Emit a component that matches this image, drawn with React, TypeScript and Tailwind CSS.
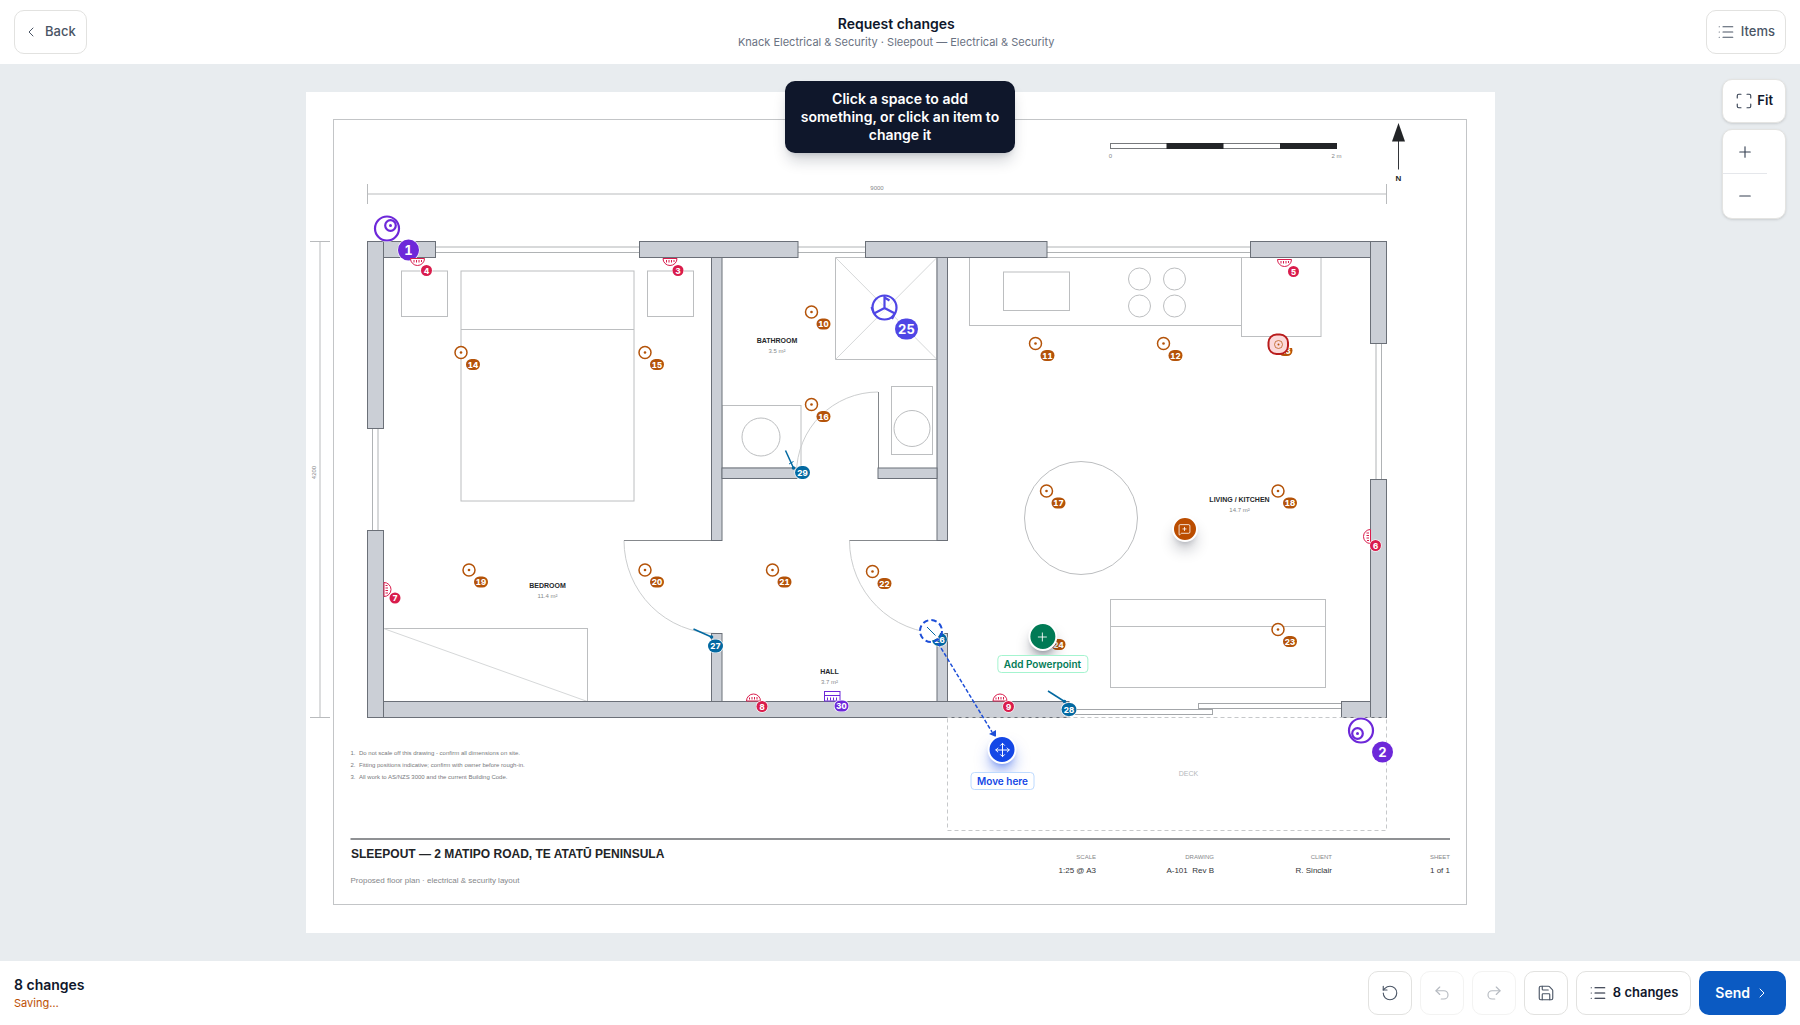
import React from 'react';
import {
  ChevronLeft,
  ChevronRight,
  List,
  Maximize,
  MessageSquarePlus,
  Minus,
  Move,
  Plus,
  Redo2,
  RotateCcw,
  Save,
  Undo2,
} from 'lucide-react';

// Sheet bounds in plan units
const SHEET = { x: 306, y: 92, width: 1189, height: 841 };

const ORANGE = '#b45309';
const ROSE = '#d91c4c';
const BLUE = '#0369a1';
const PURPLE = '#6d28d9';
const INDIGO = '#4f46e5';

type Box = [x1: number, y1: number, x2: number, y2: number];

const walls: Box[] = [
  [367.5, 241.5, 435.5, 257.5],
  [639.5, 241.5, 798, 257.5],
  [865.5, 241.5, 1047, 257.5],
  [1250.5, 241.5, 1371, 257.5],
  [367.5, 701.5, 1069, 717.5],
  [1341.5, 701.5, 1371, 717.5],
  [367.5, 241.5, 383.5, 428.5],
  [367.5, 530.5, 383.5, 717.5],
  [1370.5, 241.5, 1386.5, 343.5],
  [1370.5, 479.5, 1386.5, 717.5],
  [711.5, 257.5, 722, 540.5],
  [711.5, 633.5, 722, 701.5],
  [937, 257.5, 947.5, 540.5],
  [937, 633.5, 947.5, 701.5],
  [722, 468, 797, 478.5],
  [878, 468, 937, 478.5],
];

const windows: Box[] = [
  [435.5, 247, 639.5, 252.5],
  [798, 247, 865.5, 252.5],
  [1047, 247, 1250.5, 252.5],
  [372.5, 428.5, 378, 530.5],
  [1376, 343.5, 1381.5, 479.5],
];

const furniture: Box[] = [
  [401.5, 271, 447.5, 316.5],
  [647.5, 271, 693.5, 316.5],
  [461, 271, 634, 501],
  [835.5, 257.5, 937, 359.5],
  [722, 405.5, 801, 468],
  [891.5, 386.5, 932.5, 454.5],
  [969.5, 257.5, 1241.5, 325.5],
  [1003.5, 272, 1069.5, 310.5],
  [1241.5, 257.5, 1321, 336.5],
  [1110.5, 599.5, 1325.5, 687.5],
  [383.5, 628.5, 587.5, 701.5],
];

const circles = [
  [761, 437, 19],
  [912, 428.5, 18],
  [1139.5, 279, 11],
  [1174.5, 279, 11],
  [1139.5, 306, 11],
  [1174.5, 306, 11],
  [1081, 518, 56.5],
];

const rooms = [
  { name: 'BATHROOM', area: '3.5 m²', x: 777, y: 343 },
  { name: 'BEDROOM', area: '11.4 m²', x: 547.5, y: 588 },
  { name: 'HALL', area: '3.7 m²', x: 829.5, y: 674 },
  { name: 'LIVING / KITCHEN', area: '14.7 m²', x: 1239.5, y: 502 },
];

const notes = [
  'Do not scale off this drawing - confirm all dimensions on site.',
  'Fitting positions indicative; confirm with owner before rough-in.',
  'All work to AS/NZS 3000 and the current Building Code.',
];

const meta = [
  { label: 'SCALE', value: '1:25 @ A3', x: 1096 },
  { label: 'DRAWING', value: 'A-101\u00a0 Rev B', x: 1214 },
  { label: 'CLIENT', value: 'R. Sinclair', x: 1332 },
  { label: 'SHEET', value: '1 of 1', x: 1450 },
];

const downlights = [
  { id: 10, x: 811.5, y: 312 },
  { id: 11, x: 1035.5, y: 343.5 },
  { id: 12, x: 1163.5, y: 343.5 },
  { id: 14, x: 461, y: 352.5 },
  { id: 15, x: 645, y: 352.5 },
  { id: 16, x: 811.5, y: 404.5 },
  { id: 17, x: 1046.5, y: 491 },
  { id: 18, x: 1278, y: 491 },
  { id: 19, x: 469, y: 570 },
  { id: 20, x: 645, y: 570 },
  { id: 21, x: 772.5, y: 570 },
  { id: 22, x: 872.5, y: 571.5 },
  { id: 23, x: 1278, y: 629.5 },
  { id: 24, x: 1046.5, y: 632.5 },
];

// turn: direction the outlet faces off its wall, 0 = down
const outlets = [
  { id: 3, x: 670, y: 258, turn: 0, bx: 678, by: 270.5 },
  { id: 4, x: 417.5, y: 258, turn: 0, bx: 426.5, by: 270.5 },
  { id: 5, x: 1284.5, y: 259, turn: 0, bx: 1293.5, by: 271.5 },
  { id: 6, x: 1371, y: 536.5, turn: 90, bx: 1375.5, by: 545.5 },
  { id: 7, x: 383.5, y: 589.5, turn: -90, bx: 395, by: 598 },
  { id: 8, x: 753.5, y: 701.5, turn: 180, bx: 762, by: 706.5 },
  { id: 9, x: 1000, y: 701.5, turn: 180, bx: 1008.5, by: 706.5 },
];

const switches = [
  { id: 27, x: 711.5, y: 637, tx: 693.5, ty: 629, bx: 715.5, by: 646 },
  { id: 28, x: 1064.5, y: 701.5, tx: 1048, ty: 691, bx: 1069, by: 709.5 },
  { id: 29, x: 793.5, y: 468, tx: 785.5, ty: 450.5, bx: 802.5, by: 472.5 },
];

const asRect = ([x1, y1, x2, y2]: Box) => ({ x: x1, y: y1, width: x2 - x1, height: y2 - y1 });

interface BadgeProps {
  id: number;
  x: number;
  y: number;
  color: string;
  size?: 'sm' | 'md' | 'lg';
}

const Badge: React.FC<BadgeProps> = ({ id, x, y, color, size = 'sm' }) => {
  const h = { sm: 11, md: 13, lg: 21 }[size];
  const w = id > 9 ? { sm: 14, md: 15, lg: 23 }[size] : h;
  return (
    <g>
      <rect
        x={x - w / 2 - 0.5}
        y={y - h / 2 - 0.5}
        width={w + 1}
        height={h + 1}
        rx={h / 2}
        fill="#fff"
        stroke="none"
      />
      <rect x={x - w / 2} y={y - h / 2} width={w} height={h} rx={h / 2} fill={color} stroke="none" />
      <text
        x={x}
        y={y + (size === 'lg' ? 5 : 3)}
        textAnchor="middle"
        fill="#fff"
        stroke="none"
        className={
          size === 'lg'
            ? 'font-[Inter] text-[13px] font-bold tabular-nums'
            : 'font-[Inter] text-[8px] font-extrabold tabular-nums'
        }
      >
        {id}
      </text>
    </g>
  );
};

const Camera = ({ id, x, y, lx, ly }: { id: number; x: number; y: number; lx: number; ly: number }) => (
  <g fill="#fff" stroke={PURPLE} strokeWidth={2.2}>
    <circle cx={x} cy={y} r={13.5} stroke="none" />
    <circle cx={x} cy={y} r={12} />
    <circle cx={lx} cy={ly} r={5.3} />
    <circle cx={lx} cy={ly} r={1.5} fill={PURPLE} stroke="none" />
    <Badge id={id} x={x + 21.5} y={y + 21.5} color={PURPLE} size="lg" />
  </g>
);

const FloorPlan: React.FC = () => (
  <svg
    viewBox={`${SHEET.x} ${SHEET.y} ${SHEET.width} ${SHEET.height}`}
    role="img"
    aria-label="Sleepout floor plan"
    className="block h-full w-full bg-white font-['Liberation_Sans',Arial,sans-serif]"
  >
    <rect x={333.5} y={119.5} width={1133} height={785} fill="none" stroke="#c3c5c7" />

    {/* Overall dimensions */}
    <path d="M367.5 194H1386.5M367.5 184v20M1386.5 184v20M320 241.5V717.5M310 241.5h20M310 717.5h20" stroke="#b9bbbd" fill="none" />
    <g className="text-[6px]" fill="#85878a" textAnchor="middle">
      <text x={877} y={190}>9000</text>
      <text transform="translate(315.5 472.5) rotate(-90)">4200</text>
      <text x={1110.5} y={158}>0</text>
      <text x={1336.5} y={158}>2 m</text>
    </g>

    {/* Scale bar and north point */}
    <rect x={1110.5} y={143.5} width={226} height={5} fill="#fff" stroke="#77797c" />
    <rect x={1166.5} y={143} width={57} height={6} fill="#222427" />
    <rect x={1280} y={143} width={57} height={6} fill="#222427" />
    <path d="M1398.5 141v28.5" stroke="#333539" />
    <path d="M1398.5 123l6.5 18.5h-13z" fill="#222427" />
    <text x={1398.5} y={181} textAnchor="middle" fill="#222427" className="text-[8px] font-bold">N</text>

    {/* Furniture */}
    <g fill="none" stroke="#bcbec0">
      {furniture.map((box, i) => (
        <rect key={i} {...asRect(box)} />
      ))}
      {circles.map(([cx, cy, r], i) => (
        <circle key={i} cx={cx} cy={cy} r={r} />
      ))}
      <path d="M461 329.5h173M1110.5 626.5h215" />
      <path d="M835.5 257.5l101.5 102M937 257.5l-101.5 102M383.5 628.5l204 73" stroke="#d6d8d9" />
    </g>

    {/* Doors */}
    <g fill="none" stroke="#cccecf">
      <path d="M624 540.5a93 93 0 0 0 93 93" />
      <path d="M849.5 540.5a93 93 0 0 0 93 93" />
      <path d="M878 392a81.5 81.5 0 0 0-81.5 81.5" />
      <path d="M624 540.5h93M849.5 540.5h93M878.5 392v81" stroke="#85888c" />
    </g>

    {windows.map((box, i) => {
      const [x1, y1, x2, y2] = box;
      const d = x2 - x1 > y2 - y1 ? `M${x1} ${y1}H${x2}M${x1} ${y2}H${x2}` : `M${x1} ${y1}V${y2}M${x2} ${y1}V${y2}`;
      return <path key={i} d={d} stroke="#b0b3b5" />;
    })}
    <g fill="#fff" stroke="#a3a6a9">
      <rect x={1069} y={709.5} width={143.5} height={5} />
      <rect x={1198.5} y={703.5} width={143} height={5} />
    </g>

    <g fill="#cbcfd6" stroke="#6b7078">
      {walls.map((box, i) => (
        <rect key={i} {...asRect(box)} />
      ))}
    </g>

    <rect x={947.5} y={717.5} width={439} height={113} fill="none" stroke="#c6c8ca" strokeDasharray="4 3" />
    <text x={1188.5} y={776} textAnchor="middle" fill="#b4b7ba" className="text-[7px]">DECK</text>

    {rooms.map((room) => (
      <g key={room.name} textAnchor="middle">
        <text x={room.x} y={room.y} fill="#26282b" className="text-[7px] font-bold">{room.name}</text>
        <text x={room.x} y={room.y + 10} fill="#85878a" className="text-[6px]">{room.area}</text>
      </g>
    ))}

    {/* Notes and title block */}
    {notes.map((note, i) => (
      <g key={note} fill="#77797c" className="text-[6px]">
        <text x={350.5} y={755 + i * 12}>{i + 1}.</text>
        <text x={359} y={755 + i * 12}>{note}</text>
      </g>
    ))}
    <path d="M350.5 839H1450" stroke="#8f9194" strokeWidth={2} />
    <text x={351} y={858} fill="#222427" className="text-[12px] font-bold">SLEEPOUT — 2 MATIPO ROAD, TE ATATŪ PENINSULA</text>
    <text x={350.5} y={883} fill="#85878a" className="text-[8px]">Proposed floor plan · electrical & security layout</text>
    {meta.map((m) => (
      <g key={m.label} textAnchor="end">
        <text x={m.x} y={859} fill="#85878a" className="text-[6px]">{m.label}</text>
        <text x={m.x} y={873} fill="#333539" className="text-[8px]">{m.value}</text>
      </g>
    ))}

    {/* Fittings */}
    <Camera id={1} x={387} y={228.5} lx={390.5} ly={225.5} />
    <Camera id={2} x={1361} y={730.5} lx={1357.5} ly={733.5} />

    <g stroke={INDIGO} strokeWidth={2.2} fill="none">
      <circle cx={884.5} cy={307.5} r={13} fill="#fff" fillOpacity={0.6} stroke="none" />
      <circle cx={884.5} cy={307.5} r={12} />
      <path d="M884.5 296v12l10.5 5.5M884.5 308l-10.5 5.500M884.500 297.500l5 3M894.500 314l-2.500 5M873.500 312l-2-5" />
      <Badge id={25} x={906.5} y={329} color={INDIGO} size="lg" />
    </g>

    {outlets.map((o) => (
      <g key={o.id}>
        <g transform={`translate(${o.x} ${o.y}) rotate(${o.turn})`} stroke={ROSE} fill="#fff">
          <path d="M-7 .5H7A7 7 0 0 1-7 .5z" />
          <path d="M-3.500 2v2.500M-1 2v2.500M1.500 2v2.500M4 2v2" />
        </g>
        <Badge id={o.id} x={o.bx} y={o.by} color={ROSE} />
      </g>
    ))}

    {downlights.map((d) => (
      <g key={d.id}>
        <circle cx={d.x} cy={d.y} r={6} fill="#fff" fillOpacity={0.8} stroke={ORANGE} strokeWidth={1.5} />
        <circle cx={d.x} cy={d.y} r={1.3} fill={ORANGE} />
        <Badge id={d.id} x={d.x + 12} y={d.y + 12} color={ORANGE} />
      </g>
    ))}

    {switches.map((s) => (
      <g key={s.id} stroke={BLUE}>
        <path d={`M${s.tx} ${s.ty}L${s.x} ${s.y}`} strokeWidth={1.5} />
        <circle cx={s.x} cy={s.y} r={1.8} fill={BLUE} stroke="none" />
        <Badge id={s.id} x={s.bx} y={s.by} color={BLUE} size="md" />
      </g>
    ))}
    <path d="M789 464l4.500-2.500" stroke={BLUE} />

    <g stroke={PURPLE} fill="#fff">
      <rect x={824.5} y={691.5} width={15.5} height={9.5} />
      <path d="M824.500 695.500h15.500M827.500 697.500v3M830.500 697.500v3M833.500 697.500v3M836.500 697.500v3" />
      <Badge id={30} x={841.5} y={706} color={PURPLE} />
    </g>

    {/* Removed downlight */}
    <Badge id={13} x={1285.5} y={350.5} color={ORANGE} />
    <path d="M1276 343h18v5h-18z" fill="#fff" />
    <rect x={1268.5} y={334.5} width={19.5} height={19.5} rx={8} fill="#fbd9da" stroke="#b91c1c" strokeWidth={2} />
    <circle cx={1278.5} cy={344.5} r={4} fill="none" stroke={ORANGE} strokeOpacity={0.7} />
    <circle cx={1278.5} cy={344.5} r={1} fill={ORANGE} />

    {/* Moved switch */}
    <Badge id={26} x={939.5} y={639.5} color={BLUE} size="md" />
    <circle cx={930.5} cy={630.5} r={10} fill="#fff" />
    <path d="M927 627l8.500 8.500" stroke={BLUE} />
    <circle cx={931} cy={631} r={11} fill="none" stroke="#1d4ed8" strokeWidth={2} strokeDasharray="5.500 3.140" />
    <path d="M938 643l54 89" stroke="#1d4ed8" strokeWidth={1.5} strokeDasharray="4 2" />
    <path d="M989 734l7-4v7z" fill="#1d4ed8" />
  </svg>
);

interface PinProps {
  x: number;
  y: number;
  name: string;
  className: string;
  label?: string;
  labelClassName?: string;
  children: React.ReactNode;
}

const Pin: React.FC<PinProps> = ({ x, y, name, className, label, labelClassName, children }) => (
  <div
    className="absolute -mt-[14px] flex -translate-x-1/2 flex-col items-center"
    style={{
      left: `${((x - SHEET.x) / SHEET.width) * 100}%`,
      top: `${((y - SHEET.y) / SHEET.height) * 100}%`,
    }}
  >
    <button aria-label={name} className={`flex items-center justify-center rounded-full border-2 border-white text-white ${className}`}>
      {children}
    </button>
    {label && (
      <span className={`rounded border bg-white px-1.5 text-[10px] leading-4 font-semibold whitespace-nowrap ${labelClassName}`}>
        {label}
      </span>
    )}
  </div>
);

const iconButton =
  'flex size-11 items-center justify-center rounded-[10px] border border-[#e2e2e0] bg-white text-gray-600 disabled:opacity-40';

export default function App() {
  return (
    <div className="flex h-screen flex-col overflow-hidden bg-white font-[Inter,sans-serif] text-slate-900">
      <header className="flex h-16 shrink-0 items-center justify-between px-3.5">
        <button className="flex h-11 items-center gap-1.5 rounded-[10px] border border-[#e2e2e0] pr-2.5 pl-2 text-[13px] font-medium text-gray-600">
          <ChevronLeft size={16} strokeWidth={1.5} />
          Back
        </button>
        <div className="flex-1 text-center">
          <h1 className="text-sm leading-5 font-semibold">Request changes</h1>
          <p className="text-[11px] leading-4 text-gray-500">Knack Electrical &amp; Security · Sleepout — Electrical &amp; Security</p>
        </div>
        <button className="flex h-11 items-center gap-1.5 rounded-[10px] border border-[#e2e2e0] px-2.5 text-[13px] font-medium text-gray-600">
          <List size={18} strokeWidth={1.5} />
          Items
        </button>
      </header>

      <main className="relative min-h-0 flex-1 bg-[#e8ecef] py-7">
        <div className="relative mx-auto aspect-[1189/841] h-full max-w-full">
          <FloorPlan />
          <Pin x={1185.5} y={530} name="Comment" className="size-[26px] bg-amber-700 shadow-lg shadow-slate-900/30">
            <MessageSquarePlus size={13} strokeWidth={1.5} />
          </Pin>
          <Pin
            x={1043}
            y={636}
            name="Added powerpoint"
            label="Add Powerpoint"
            className="size-[29px] bg-emerald-700 shadow-lg shadow-slate-900/40"
            labelClassName="mt-1 border-emerald-200 text-emerald-700"
          >
            <Plus size={14} strokeWidth={1.5} />
          </Pin>
          <Pin
            x={1003}
            y={749}
            name="Moved switch"
            label="Move here"
            className="size-[29px] bg-blue-700 shadow-lg shadow-blue-700/50"
            labelClassName="mt-2 border-blue-200 text-blue-700"
          >
            <Move size={16} strokeWidth={1.5} />
          </Pin>
        </div>

        <div
          role="status"
          className="absolute top-[17px] left-1/2 w-[230px] -translate-x-1/2 rounded-[10px] bg-slate-900 px-3 py-[9px] text-center text-sm leading-[18px] font-semibold text-white shadow-lg shadow-slate-900/20"
        >
          Click a space to add something, or click an item to change it
        </div>

        <div className="absolute top-[15px] right-3.5 flex flex-col gap-1.5">
          <button className="flex h-11 items-center gap-1 rounded-[10px] border border-[#e4e4e2] bg-white px-3 text-[13px] font-semibold shadow-sm">
            <Maximize size={18} strokeWidth={1.5} className="text-gray-700" />
            Fit
          </button>
          <div className="flex flex-col overflow-hidden rounded-[10px] border border-[#e4e4e2] bg-white text-gray-700 shadow-sm">
            <button aria-label="Zoom in" className="flex size-11 items-center justify-center border-b border-gray-200">
              <Plus size={18} strokeWidth={1.5} />
            </button>
            <button aria-label="Zoom out" className="flex size-11 items-center justify-center">
              <Minus size={18} strokeWidth={1.5} />
            </button>
          </div>
        </div>
      </main>

      <footer className="flex h-16 shrink-0 items-center justify-between px-3.5">
        <div>
          <p className="text-sm leading-5 font-semibold">8 changes</p>
          <p className="text-[11px] leading-4 text-amber-700">Saving…</p>
        </div>
        <div className="flex gap-2">
          <button aria-label="Start over" className={iconButton}>
            <RotateCcw size={18} strokeWidth={1.5} />
          </button>
          <button aria-label="Undo" disabled className={iconButton}>
            <Undo2 size={18} strokeWidth={1.5} />
          </button>
          <button aria-label="Redo" disabled className={iconButton}>
            <Redo2 size={18} strokeWidth={1.5} />
          </button>
          <button aria-label="Save" className={iconButton}>
            <Save size={18} strokeWidth={1.5} />
          </button>
          <button className="flex h-11 items-center gap-1.5 rounded-[10px] border border-[#e2e2e0] px-3 text-[13px] font-semibold">
            <List size={18} strokeWidth={1.5} />
            8 changes
          </button>
          <button className="flex h-11 items-center gap-1 rounded-[10px] bg-[#0b5ac2] px-4 text-sm font-semibold text-white">
            Send
            <ChevronRight size={16} strokeWidth={1.5} />
          </button>
        </div>
      </footer>
    </div>
  );
}
